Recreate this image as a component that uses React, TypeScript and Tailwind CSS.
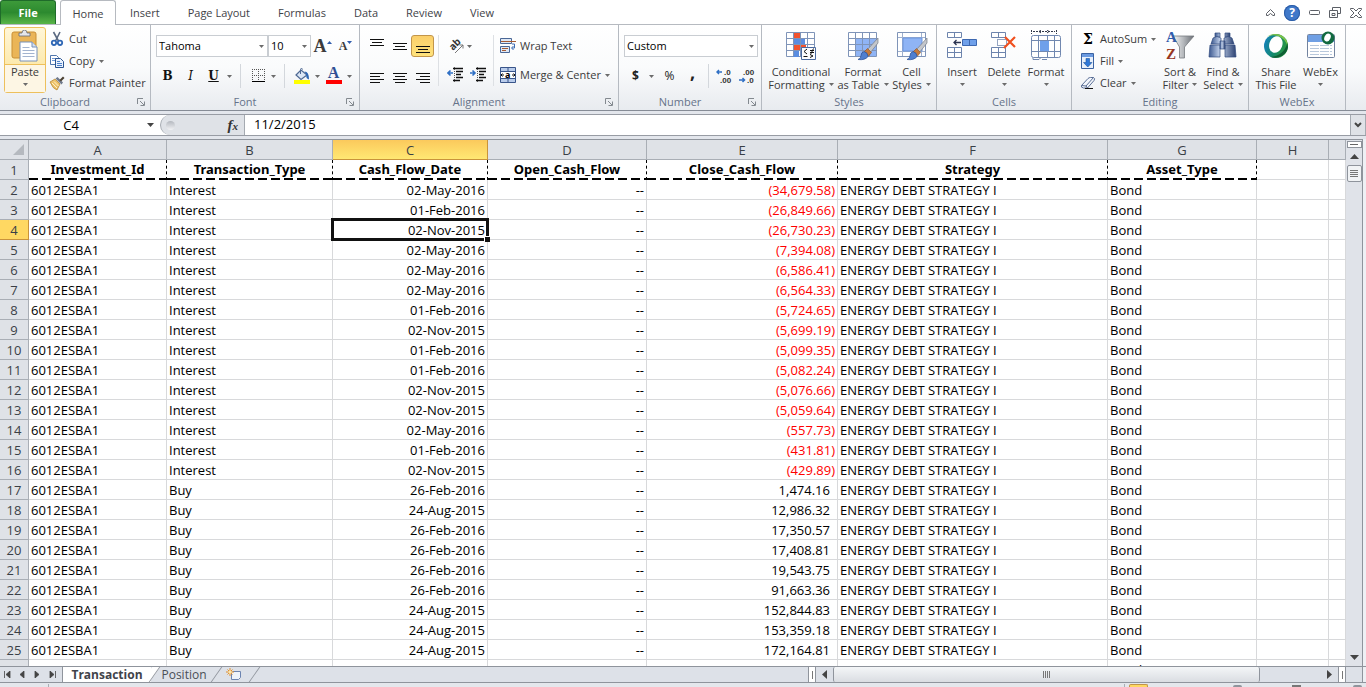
import type { ReactNode } from "react";

const tabs = ["Insert", "Page Layout", "Formulas", "Data", "Review", "View"];
const columns = ["A", "B", "C", "D", "E", "F", "G", "H", ""];
const headers = ["Investment_Id", "Transaction_Type", "Cash_Flow_Date", "Open_Cash_Flow", "Close_Cash_Flow", "Strategy", "Asset_Type"];

const rows: [string, string, string][] = [
    ["Interest", "02-May-2016", "(34,679.58)"],
    ["Interest", "01-Feb-2016", "(26,849.66)"],
    ["Interest", "02-Nov-2015", "(26,730.23)"],
    ["Interest", "02-May-2016", "(7,394.08)"],
    ["Interest", "02-May-2016", "(6,586.41)"],
    ["Interest", "02-May-2016", "(6,564.33)"],
    ["Interest", "01-Feb-2016", "(5,724.65)"],
    ["Interest", "02-Nov-2015", "(5,699.19)"],
    ["Interest", "01-Feb-2016", "(5,099.35)"],
    ["Interest", "01-Feb-2016", "(5,082.24)"],
    ["Interest", "02-Nov-2015", "(5,076.66)"],
    ["Interest", "02-Nov-2015", "(5,059.64)"],
    ["Interest", "02-May-2016", "(557.73)"],
    ["Interest", "01-Feb-2016", "(431.81)"],
    ["Interest", "02-Nov-2015", "(429.89)"],
    ["Buy", "26-Feb-2016", "1,474.16"],
    ["Buy", "24-Aug-2015", "12,986.32"],
    ["Buy", "26-Feb-2016", "17,350.57"],
    ["Buy", "26-Feb-2016", "17,408.81"],
    ["Buy", "26-Feb-2016", "19,543.75"],
    ["Buy", "26-Feb-2016", "91,663.36"],
    ["Buy", "24-Aug-2015", "152,844.83"],
    ["Buy", "24-Aug-2015", "153,359.18"],
    ["Buy", "24-Aug-2015", "172,164.81"],
];

const Arrow = () => (
    <svg className="h-[3px] w-[5px] shrink-0" viewBox="0 0 5 3" fill="#6b6b6b"><path d="M0 0h5L2.500 3z" /></svg>
);

const Divider = () => <span className="h-6 w-px shrink-0 bg-[#d3d7dc]" />;

/* ---------- ribbon icons ---------- */

const PasteIcon = () => (
    <svg className="h-8 w-8" viewBox="0 0 32 32">
        <rect x="3" y="2" width="24" height="26" rx="2" fill="#eab557" stroke="#c98f35" />
        <path d="M10 6V3h3q0-3 2.500-3T18 3h3v3z" fill="#e4e6ea" stroke="#666b75" strokeWidth=".8" />
        <path d="M11 12h12l5 5v14H11z" fill="#fff" stroke="#7790b8" />
        <path d="M23 12v5h5" fill="#d6e1f1" stroke="#7790b8" />
        <path d="M13.500 17.500h7M13.500 20.500h12M13.500 23.500h12M13.500 26.500h12" stroke="#a3b4cf" />
    </svg>
);

const CutIcon = () => (
    <svg className="h-4 w-4" viewBox="0 0 16 16" fill="none">
        <path d="M4.500 1l5 9M11 1L6.500 10" stroke="#5b6a82" strokeWidth="1.600" />
        <circle cx="5" cy="11.800" r="2.200" stroke="#2f67b5" strokeWidth="1.800" />
        <circle cx="11" cy="11.800" r="2.200" stroke="#2f67b5" strokeWidth="1.800" />
    </svg>
);

const CopyIcon = () => (
    <svg className="h-4 w-4" viewBox="0 0 16 16">
        <path d="M1.500 2.500h6l2 2v7h-8z" fill="#fff" stroke="#4f76ad" />
        <path d="M3 5.500h4M3 7.500h5" stroke="#6f98d3" />
        <path d="M6.500 5.500h5l3 3v6h-8z" fill="#eaf2fd" stroke="#2c5591" />
        <path d="M8 8.500h3M8 10.500h5M8 12.500h5" stroke="#4b7fc9" />
    </svg>
);

const PainterIcon = () => (
    <svg className="h-4 w-4" viewBox="0 0 16 16">
        <path d="M1 7l5-3 5 5-3 6q-4-1-7-8z" fill="#edc26a" stroke="#b78a38" strokeWidth=".8" />
        <path d="M3 8l5 5M5 6.500l4.500 4.500" stroke="#fff1c9" />
        <path d="M6.500 3.500l6 6 1.500-2-5.500-5.500z" fill="#707a8c" />
        <path d="M10.500 5l3.500-3.500 1.500 1.500L12 6.500z" fill="#4a4032" />
    </svg>
);

const BordersIcon = () => (
    <svg className="h-4 w-4" viewBox="0 0 16 16" stroke="#555">
        <path d="M2.500 1v12M8.500 1v12M14.500 1v12M2 1.500h13M2 7.500h13" strokeDasharray="1 1" />
        <path d="M2 13.500h13" stroke="#000" />
    </svg>
);

const BucketIcon = () => (
    <svg className="h-4 w-4" viewBox="0 0 16 16">
        <path d="M2 7l5-5 6 5-6 4.500z" fill="#dbe6f5" stroke="#4e6993" strokeWidth="1.200" />
        <path d="M6.500 6V1.500q0-1 1-1t1 1" fill="none" stroke="#4e6993" />
        <path d="M10.500 3.500q4.500 0 4.500 8-3.500-1-2.500-4.500z" fill="#2c66b4" />
        <path d="M0 12h16v4H0z" fill="#ff0" />
    </svg>
);

const AlignIcon = ({ kind }: { kind: "top" | "middle" | "bottom" | "left" | "center" | "right" }) => {
    const d = {
        top: "M1 1.500h14M3 4.500h10M1 7.500h14",
        middle: "M1 5.500h14M3 8.500h10M1 11.500h14",
        bottom: "M1 8.500h14M3 11.500h10M1 14.500h14",
        left: "M1 2.500h14M1 5.500h10M1 8.500h14M1 11.500h10",
        center: "M1 2.500h14M3 5.500h10M1 8.500h14M3 11.500h10",
        right: "M1 2.500h14M5 5.500h10M1 8.500h14M5 11.500h10",
    }[kind];
    return <svg className="h-4 w-4" viewBox="0 0 16 16"><path d={d} stroke="#111" strokeWidth="1.200" /></svg>;
};

const IndentIcon = ({ out }: { out?: boolean }) => (
    <svg className="h-4 w-4" viewBox="0 0 16 16" fill="none">
        <path d="M6 1.500h10M9 4.500h7M9 7.500h5M9 10.500h7M6 13.500h7" stroke="#111" strokeWidth="1.300" />
        <path d="M7.500 0v16" stroke="#555" strokeDasharray="1 1" />
        <path d={out ? "M6 6H1M3.500 3.500L1 6l2.500 2.500" : "M0 6h5M2.500 3.500L5 6 2.500 8.500"} stroke="#2f6fc4" strokeWidth="1.600" />
    </svg>
);

const OrientationIcon = () => (
    <svg className="h-5 w-5 overflow-visible" viewBox="0 0 20 20">
        <text x="3" y="12" transform="rotate(-45 8 10)" fontFamily="Noto Sans" fontSize="10" fontWeight="700" fill="#333">ab</text>
        <path d="M8 17l8-8M12.500 9H16v3.500" fill="none" stroke="#777" />
    </svg>
);

const WrapIcon = () => (
    <svg className="h-4 w-4" viewBox="0 0 16 16" fill="none">
        <path d="M.5.500h11v5H.5zM.5 8.500h9v6H.5z" fill="#dfe8f5" stroke="#4a6796" />
        <path d="M1 3.500h15M2 10.500h6M2 12.500h4" stroke="#a55a33" />
        <path d="M12 6h2.500v4H12M13.500 8L11.500 10l2 2" stroke="#3c6db5" />
    </svg>
);

const MergeIcon = () => (
    <svg className="h-4 w-4" viewBox="0 0 16 16">
        <path d="M.5.500h15v15H.5z" fill="#b9cceb" stroke="#39558a" />
        <path d="M.5 4.500h15M.5 11.500h15M8 1v3M8 12v3" stroke="#39558a" />
        <path d="M1 5h14v6H1z" fill="#fff" />
        <path d="M1 8h3M12 8h3M2.500 6.500L1 8l1.500 1.500M13.500 6.500L15 8l-1.500 1.500" fill="none" stroke="#111" />
        <text x="5" y="11" fontFamily="Noto Sans" fontSize="9" fontWeight="700">a</text>
    </svg>
);

const DecimalIcon = ({ more }: { more?: boolean }) => (
    <svg className="h-4 w-4" viewBox="0 0 16 16" fontFamily="Liberation Sans" fontSize="8" fontWeight="700" fill="#333">
        <text x={more ? 8 : 4} y="7">{more ? ".0" : ".00"}</text>
        <text x={more ? 4 : 8} y="15">{more ? ".00" : ".0"}</text>
        <path d={more ? "M6 4H1M3 2L1 4l2 2" : "M0 12h5.500M3.500 10l2 2-2 2"} fill="none" stroke="#2f6fc4" strokeWidth="1.500" />
    </svg>
);

const Brush = () => (
    <>
        <path d="M31 8L20 20l3 3 8-10z" fill="#c3c6cb" stroke="#767b85" strokeWidth=".7" />
        <path d="M20.500 18.500l4 4-3 3.500-4.500-4z" fill="#c57a3c" stroke="#8a4f20" strokeWidth=".6" />
        <path d="M17 21.500q4 1 4 5-3 4-10 3 3-1 3-4t3-4z" fill="#4f7fd0" stroke="#2a4f94" strokeWidth=".7" />
    </>
);

const ConditionalIcon = () => (
    <svg className="h-8 w-8" viewBox="0 0 32 32">
        <path d="M1.500 2.500h28v24h-28z" fill="#fff" stroke="#7f94b8" />
        <path d="M8 3h7v5H8zM8 15h13v5H8z" fill="#f2532e" />
        <path d="M8 9h12v6H8zM8 21h6v6H8z" fill="#5b8de0" />
        <path d="M8.500 3v23M15.500 3v23M22.500 3v23M2 8.500h27M2 14.500h27M2 20.500h27" stroke="#7f94b8" />
        <path d="M16.500 17.500h14v12h-14z" fill="#fbfcfe" stroke="#4b6a9f" />
        <path d="M22 19l-3 2.500 3 2.500M18.500 26.500h4M25 20.500h4M25 22.500h4M28.500 18.500l-3 6M25 24.500l3 1.500-3 1.500" fill="none" stroke="#111" />
    </svg>
);

const TableIcon = () => (
    <svg className="h-8 w-8" viewBox="0 0 32 32">
        <path d="M1.500 2.500h28v24h-28z" fill="#fff" stroke="#7f94b8" />
        <path d="M9 9h20v17H9z" fill="#8fb4f5" />
        <path d="M8.500 3v23M15.500 3v23M22.500 3v23M2 8.500h27M2 14.500h27M2 20.500h27" stroke="#7f94b8" />
        <Brush />
    </svg>
);

const CellStylesIcon = () => (
    <svg className="h-8 w-8" viewBox="0 0 32 32">
        <path d="M1.500 2.500h28v24h-28z" fill="#fff" stroke="#7f94b8" />
        <path d="M6.500 3v23M25.500 3v23M2 7.500h27M2 21.500h27" stroke="#9fb0cd" />
        <path d="M7 8h19v13H7z" fill="#8fb4f5" stroke="#6d95dc" />
        <Brush />
    </svg>
);

const InsertIcon = () => (
    <svg className="h-8 w-8" viewBox="0 0 32 32" stroke="#6d84ad" fill="#fff">
        <path d="M1.500 2.500h14v5h-14zM8.500 3v4M1.500 17.500h14v10h-14zM8.500 18v9M2 22.500h13" />
        <path d="M16.500 9.500h14v6h-14z" fill="#6fa0ea" stroke="#3d68b0" />
        <path d="M23.500 10v5" stroke="#3d68b0" />
        <path d="M15 12.500H8M10.500 10L8 12.500l2.500 2.500" fill="none" stroke="#2b3350" strokeWidth="1.300" />
    </svg>
);

const DeleteIcon = () => (
    <svg className="h-8 w-8" viewBox="0 0 32 32" stroke="#6d84ad" fill="#fff">
        <path d="M3.500 2.500h14v5h-14zM10.500 3v4M3.500 17.500h14v10h-14zM10.500 18v9M4 22.500h13" />
        <path d="M9.500 9.500h9v6h-9z" stroke="#2b4a85" strokeDasharray="1 1" />
        <path d="M17 7l10 10M27 7L16 18" fill="none" stroke="#f0501f" strokeWidth="2.200" />
    </svg>
);

const FormatIcon = () => (
    <svg className="h-8 w-8" viewBox="0 0 32 32" stroke="#7188b0" fill="none">
        <path d="M1.500 0v4M26.500 0v4M3 1.500h22" stroke="#333a4c" strokeDasharray="2 1" />
        <path d="M11 0L9 1.500 11 3M17 0l2 1.500L17 3" stroke="#333a4c" />
        <rect x="1.500" y="5.500" width="29" height="22" rx="2" fill="#fff" />
        <path d="M2 10.500h28M2 21.500h28M8.500 6v21M17.500 6v4M24.500 6v21M17.500 22v5" />
        <path d="M10 11h9v10h-9z" fill="#6fa0ea" stroke="none" />
        <path d="M3 27.500v2h6l2-2M12 29.500h5" />
    </svg>
);

const FillIcon = () => (
    <svg className="h-4 w-4" viewBox="0 0 16 16">
        <path d="M1.500.500h12v15h-12z" fill="#e8f0fb" stroke="#3a62a2" />
        <path d="M2 1h11v3H2z" fill="#6b9ae0" />
        <path d="M6 5.500h3.500v4h2.500l-4.200 4.500L3.500 9.500H6z" fill="#2f78d8" stroke="#1e569f" strokeWidth=".6" />
    </svg>
);

const EraserIcon = () => (
    <svg className="h-4 w-4" viewBox="0 0 16 16" stroke="#5a6f96">
        <path d="M1.500 10.500L8 3.500q1-1 2.500-1h3q2 1 .5 3L7.500 13h-4q-3-.5-2-2.500z" fill="#f4f7fc" />
        <path d="M1.500 10.500l4.500.5 7.500-8.500M6 11l1.500 2" fill="none" />
        <path d="M5 13.500h8" stroke="#111" />
    </svg>
);

const SortIcon = () => (
    <svg className="h-8 w-8" viewBox="0 0 32 32">
        <defs>
            <linearGradient id="funnel"><stop stopColor="#f6f6f6" /><stop offset=".5" stopColor="#b4b7bb" /><stop offset="1" stopColor="#686c72" /></linearGradient>
        </defs>
        <path d="M9 6h21L20.500 17v11h-5V17z" fill="url(#funnel)" stroke="#777b80" strokeWidth=".8" />
        <text x="2" y="12" fontFamily="Liberation Serif" fontSize="15" fontWeight="700" fill="#2f5cac">A</text>
        <text x="2" y="29" fontFamily="Liberation Serif" fontSize="15" fontWeight="700" fill="#96361f">Z</text>
    </svg>
);

const FindIcon = () => (
    <svg className="h-8 w-8" viewBox="0 0 32 32">
        <defs>
            <linearGradient id="barrel"><stop stopColor="#3b588f" /><stop offset=".4" stopColor="#c4d3ec" /><stop offset="1" stopColor="#2c4272" /></linearGradient>
        </defs>
        <g fill="url(#barrel)" stroke="#314b7e" strokeWidth=".7">
            <path d="M8 3h5v4H8zM18 3h5v4h-5z" />
            <path d="M6 8q4-3 8 0v6H4zM17 8q4-3 8 0l2 6H17z" />
            <path d="M3 15h10v12H2zM18 15h10l1 12H18z" />
            <path d="M13 11h5v8h-5z" />
        </g>
    </svg>
);

const ShareIcon = () => (
    <svg className="h-8 w-8" viewBox="0 0 32 32">
        <defs>
            <linearGradient id="ball" x1="0" y1=".3" x2="1" y2=".6"><stop stopColor="#1681bd" /><stop offset=".5" stopColor="#128a6a" /><stop offset="1" stopColor="#2f9a3c" /></linearGradient>
        </defs>
        <circle cx="16" cy="16" r="12" fill="url(#ball)" />
        <path d="M7 7Q13 2 21 5q7 4 7 12-3-9-10-11-6-2-11 1z" fill="#7cc348" />
        <path d="M27.500 13q2 8-5 12.500-6 3.500-12 1.500 13-1 17-14z" fill="#0f5f35" />
        <ellipse cx="16" cy="14.500" rx="6.500" ry="8.500" transform="rotate(20 16 14)" fill="#fff" />
    </svg>
);

const WebExIcon = () => (
    <svg className="h-8 w-8" viewBox="0 0 32 32">
        <rect x="2.500" y="4.500" width="27" height="23" rx="1" fill="#fff" stroke="#72839f" />
        <path d="M3 5h26v7H3z" fill="#6f9fe4" />
        <path d="M5 15.500h22M5 18.500h22M5 21.500h22M5 24.500h22" stroke="#b8c8dc" strokeDasharray="9 1" />
        <circle cx="23" cy="8" r="6.500" fill="#126a40" />
        <ellipse cx="22.500" cy="7.500" rx="3" ry="4.200" transform="rotate(25 22.500 7.500)" fill="#fff" />
    </svg>
);

/* ---------- ribbon parts ---------- */

const Group = ({ label, className, launcher, children }: { label: string; className: string; launcher?: boolean; children: ReactNode }) => (
    <section className={`flex shrink-0 flex-col border-r border-[#b5bac1] ${className}`}>
        <div className="flex min-h-0 flex-1">{children}</div>
        <div className="flex h-4 items-center text-[#66738a]">
            <span className="flex-1 text-center">{label}</span>
            {launcher && (
                <button aria-label={`${label} settings`} className="flex w-5 justify-end pr-[5px]">
                    <svg className="h-2 w-2" viewBox="0 0 8 8" fill="none" stroke="#83898f"><path d="M.5 6V.500H6M3 3l4 4M7.500 3.500v4h-4" /></svg>
                </button>
            )}
        </div>
    </section>
);

const BigButton = ({ icon, lines, className, arrow = true }: { icon: ReactNode; lines: string[]; className: string; arrow?: boolean }) => (
    <button className={`flex shrink-0 flex-col items-center whitespace-nowrap pt-[5px] leading-[13px] ${className}`}>
        {icon}
        <span className="mt-[3px]">{lines[0]}</span>
        <span className="flex h-[13px] items-center gap-1">{lines[1]}{arrow && <Arrow />}</span>
    </button>
);

const SmallButton = ({ icon, label, arrow }: { icon: ReactNode; label: string; arrow?: boolean }) => (
    <button className="flex h-[22px] items-center gap-1 whitespace-nowrap">
        {icon}
        <span>{label}</span>
        {arrow && <Arrow />}
    </button>
);

const Tool = ({ label, children }: { label: string; children: ReactNode }) => (
    <button aria-label={label} className="flex h-[22px] w-[23px] items-center justify-center">{children}</button>
);

const More = ({ label }: { label: string }) => (
    <button aria-label={label} className="flex h-[22px] w-[9px] items-center justify-center"><Arrow /></button>
);

const Combo = ({ label, value, className }: { label: string; value: string; className: string }) => (
    <div className={`relative h-[22px] ${className}`}>
        <select aria-label={label} className="h-full w-full appearance-none border border-[#c9cdd2] bg-white px-0.5 text-[11px] text-black">
            <option>{value}</option>
        </select>
        <span className="pointer-events-none absolute inset-y-0 right-1 flex items-center"><Arrow /></span>
    </div>
);

const Ribbon = () => (
    <div className="flex h-[86px] shrink-0 overflow-hidden border-b border-[#868c96] bg-linear-to-b from-white via-[#fafbfc] to-[#e8ebef] text-[11px] text-[#3b3b3b]">
        <Group label="Clipboard" className="w-[151px]" launcher>
            <button className="ml-1 mt-0.5 flex h-[66px] w-[42px] shrink-0 flex-col items-center rounded-[3px] border border-[#edc05c] bg-linear-to-b from-[#fff6d8] to-[#fbe08a]">
                <span className="flex h-[37px] w-full shrink-0 items-center justify-center border-b border-[#edc05c]"><PasteIcon /></span>
                <span className="flex w-full flex-1 flex-col items-center gap-[5px] bg-[#fdf6e4] leading-[13px]">Paste<Arrow /></span>
            </button>
            <div className="ml-[3px] mt-[3px] flex flex-col">
                <SmallButton icon={<CutIcon />} label="Cut" />
                <SmallButton icon={<CopyIcon />} label="Copy" arrow />
                <SmallButton icon={<PainterIcon />} label="Format Painter" />
            </div>
        </Group>

        <Group label="Font" className="w-[209px]" launcher>
            <div className="flex flex-col gap-[7px] pl-[5px] pt-[10px]">
                <div className="flex">
                    <Combo label="Font name" value="Tahoma" className="w-[112px]" />
                    <Combo label="Font size" value="10" className="w-[43px]" />
                    <Tool label="Grow font">
                        <span className="font-['Liberation_Serif',serif] text-lg font-bold">A</span>
                        <svg className="mb-2 h-[3px] w-[5px]" viewBox="0 0 5 3" fill="#2f5cac"><path d="M0 3h5L2.500 0z" /></svg>
                    </Tool>
                    <Tool label="Shrink font">
                        <span className="font-['Liberation_Serif',serif] text-xs font-bold">A</span>
                        <svg className="mb-2 h-[3px] w-[5px]" viewBox="0 0 5 3" fill="#2f5cac"><path d="M0 0h5L2.500 3z" /></svg>
                    </Tool>
                </div>
                <div className="flex items-center font-['DejaVu_Serif',serif] text-xs text-[#111]">
                    <Tool label="Bold"><b>B</b></Tool>
                    <Tool label="Italic"><span className="italic">I</span></Tool>
                    <Tool label="Underline"><b className="underline">U</b></Tool>
                    <More label="Underline styles" />
                    <span className="flex w-3 justify-center"><Divider /></span>
                    <Tool label="Borders"><BordersIcon /></Tool>
                    <More label="Border styles" />
                    <span className="flex w-3 justify-center"><Divider /></span>
                    <Tool label="Fill color"><BucketIcon /></Tool>
                    <More label="Fill colors" />
                    <Tool label="Font color">
                        <span className="flex h-4 w-4 items-end justify-center border-b-4 border-[#f00] font-['Liberation_Serif',serif] text-base leading-[14px] text-[#2f4f93]"><b>A</b></span>
                    </Tool>
                    <More label="Font colors" />
                </div>
            </div>
        </Group>

        <Group label="Alignment" className="w-[259px]" launcher>
            <div className="flex gap-1 pl-[5px] pt-[10px]">
                <div className="grid grid-cols-3 gap-y-[7px]">
                    <Tool label="Top align"><AlignIcon kind="top" /></Tool>
                    <Tool label="Middle align"><AlignIcon kind="middle" /></Tool>
                    <button aria-label="Bottom align" className="flex h-[22px] w-[23px] items-center justify-center rounded-[3px] border border-[#c2954a] bg-linear-to-b from-[#fbcf6a] to-[#ffe37c]"><AlignIcon kind="bottom" /></button>
                    <Tool label="Align left"><AlignIcon kind="left" /></Tool>
                    <Tool label="Center"><AlignIcon kind="center" /></Tool>
                    <Tool label="Align right"><AlignIcon kind="right" /></Tool>
                </div>
                <span className="h-[51px] w-px bg-[#dde0e4]" />
                <div className="flex flex-col gap-[7px]">
                    <button aria-label="Orientation" className="flex h-[22px] items-center pl-1"><OrientationIcon /><Arrow /></button>
                    <div className="flex">
                        <Tool label="Decrease indent"><IndentIcon out /></Tool>
                        <Tool label="Increase indent"><IndentIcon /></Tool>
                    </div>
                </div>
                <span className="h-[51px] w-px bg-[#dde0e4]" />
                <div className="flex flex-col gap-[7px] pl-0.5">
                    <SmallButton icon={<WrapIcon />} label="Wrap Text" />
                    <SmallButton icon={<MergeIcon />} label="Merge & Center" arrow />
                </div>
            </div>
        </Group>

        <Group label="Number" className="w-[143px]" launcher>
            <div className="flex flex-col gap-[7px] pl-[5px] pt-[10px]">
                <Combo label="Number format" value="Custom" className="w-[134px]" />
                <div className="flex items-center text-xs text-[#222]">
                    <Tool label="Accounting format"><b>$</b></Tool>
                    <More label="Currencies" />
                    <span className="w-0.5" />
                    <Tool label="Percent style">%</Tool>
                    <Tool label="Comma style"><b className="pb-2 text-lg leading-3">,</b></Tool>
                    <span className="flex w-2 justify-center"><Divider /></span>
                    <Tool label="Increase decimal"><DecimalIcon more /></Tool>
                    <Tool label="Decrease decimal"><DecimalIcon /></Tool>
                </div>
            </div>
        </Group>

        <Group label="Styles" className="w-[175px]">
            <div className="flex pl-1">
                <BigButton icon={<ConditionalIcon />} lines={["Conditional", "Formatting"]} className="w-[70px]" />
                <BigButton icon={<TableIcon />} lines={["Format", "as Table"]} className="w-[54px]" />
                <BigButton icon={<CellStylesIcon />} lines={["Cell", "Styles"]} className="w-[43px]" />
            </div>
        </Group>

        <Group label="Cells" className="w-[135px]">
            <div className="flex pl-1">
                <BigButton icon={<InsertIcon />} lines={["Insert", ""]} className="w-[42px]" />
                <BigButton icon={<DeleteIcon />} lines={["Delete", ""]} className="w-[42px]" />
                <BigButton icon={<FormatIcon />} lines={["Format", ""]} className="w-[42px]" />
            </div>
        </Group>

        <Group label="Editing" className="w-[177px]">
            <div className="flex w-[86px] flex-col pl-2 pt-[3px]">
                <SmallButton icon={<span className="w-4 text-center font-['DejaVu_Serif',serif] text-sm font-bold text-black">Σ</span>} label="AutoSum" arrow />
                <SmallButton icon={<FillIcon />} label="Fill" arrow />
                <SmallButton icon={<EraserIcon />} label="Clear" arrow />
            </div>
            <BigButton icon={<SortIcon />} lines={["Sort &", "Filter"]} className="w-[44px]" />
            <BigButton icon={<FindIcon />} lines={["Find &", "Select"]} className="w-[42px]" />
        </Group>

        <Group label="WebEx" className="w-[97px]">
            <div className="flex pl-1">
                <BigButton icon={<ShareIcon />} lines={["Share", "This File"]} className="w-[46px]" arrow={false} />
                <BigButton icon={<WebExIcon />} lines={["WebEx", ""]} className="w-[43px]" />
            </div>
        </Group>
    </div>
);

const TabBar = () => (
    <nav className="flex h-[25px] shrink-0 items-end border-b border-[#b6bac0] bg-white text-[11px] text-[#3f4247]">
        <button className="mr-1 h-6 w-14 rounded-t-[3px] border border-b-0 border-[#1f6b2a] bg-linear-to-b from-[#3d9a3a] via-[#2c8a2f] to-[#59b548] pt-0.5 font-bold text-white">File</button>
        <button className="-mb-px h-[25px] w-14 rounded-t-[3px] border border-b-0 border-[#b6bac0] bg-white pt-0.5">Home</button>
        <div className="flex h-6 flex-1 items-center gap-7 pl-[14px] pt-0.5">
            {tabs.map((tab) => <button key={tab}>{tab}</button>)}
        </div>
        <div className="flex h-6 items-center gap-[9px] pr-1 pt-px text-[#5b5f66]">
            <button aria-label="Minimize ribbon">
                <svg className="h-2 w-[9px]" viewBox="0 0 9 8" fill="none" stroke="currentColor"><path d="M.5 4.500l4-4 4 4v2H7l-2.500-2-2.500 2H.5z" /></svg>
            </button>
            <button aria-label="Help" className="flex h-4 w-4 items-center justify-center rounded-full bg-[#3f78c9] text-xs font-bold text-white ring-1 ring-inset ring-[#2b5ca6]">?</button>
            <button aria-label="Minimize">
                <svg className="h-[5px] w-[11px]" viewBox="0 0 11 5" fill="none" stroke="currentColor"><rect x=".5" y=".5" width="10" height="4" rx="1" /></svg>
            </button>
            <button aria-label="Restore">
                <svg className="h-[11px] w-3" viewBox="0 0 12 11" fill="none" stroke="currentColor"><path d="M3.500 3V.500h8v6H8.500M.5 3.500h8v7h-8zM3 6.500h3v2H3z" /></svg>
            </button>
            <button aria-label="Close">
                <svg className="h-[10px] w-3" viewBox="0 0 12 10" fill="none" stroke="currentColor"><path d="M.5.500h3L6 3 8.500.500h3v1L8 5l3.500 3.500v1h-3L6 7 3.500 9.500h-3v-1L4 5 .5 1.500z" /></svg>
            </button>
        </div>
    </nav>
);

const FormulaBar = () => (
    <div className="flex h-[28px] shrink-0 flex-col bg-[#e3e6ec] pt-[3px] text-[13px] text-black">
        <div className="flex h-[22px] border-y border-[#989ca4] bg-white">
            <div className="relative w-40">
                <input aria-label="Name box" defaultValue="C4" className="h-full w-[142px] bg-transparent text-center outline-none" />
                <svg className="absolute right-[6px] top-2 h-1 w-[7px]" viewBox="0 0 7 4" fill="#444"><path d="M0 0h7L3.500 4z" /></svg>
            </div>
            <div className="flex w-[85px] items-center justify-between rounded-l-full border-l border-r border-[#a5aab1] bg-[#dfe2e7] pl-[5px] pr-1.5">
                <span className="h-[9px] w-[9px] rounded-full bg-linear-to-b from-[#b4b8bf] to-[#f2f3f5]" />
                <button aria-label="Insert function" className="font-['Liberation_Serif',serif] text-[15px] font-bold italic text-[#333]">f<span className="text-[11px]">x</span></button>
            </div>
            <input aria-label="Formula" defaultValue="11/2/2015" className="min-w-0 flex-1 pl-[9px] outline-none" />
            <button aria-label="Expand formula bar" className="flex w-4 items-center justify-center border border-y-0 border-[#a5aab1] bg-[#dfe2e7]">
                <svg className="h-[6px] w-2" viewBox="0 0 8 6" fill="none" stroke="#444" strokeWidth="2"><path d="M1 1l3 3 3-3" /></svg>
            </button>
        </div>
    </div>
);

const cell = "h-5 overflow-hidden whitespace-nowrap border-b border-r border-[#d8d9db] px-0.5 pt-0.5 leading-[17px]";

const RowHead = ({ n, active }: { n: number; active?: boolean }) => (
    <th scope="row" className={`h-5 border-b border-r px-0 pt-0.5 text-center text-[13px] font-normal leading-[17px] text-[#3a3f46] ${active ? "border-[#c9933b] bg-[#ffd862]" : "border-[#a9aeb5] bg-[#dfe2e7]"}`}>{n}</th>
);

const Grid = () => (
    <div className="min-w-0 flex-1 overflow-hidden border-t border-[#8f949c] bg-white">
        <table className="w-full table-fixed border-separate border-spacing-0 text-[13px] text-black">
            <colgroup>
                <col className="w-[29px]" />
                <col className="w-[138px]" />
                <col className="w-[166px]" />
                <col className="w-[155px]" />
                <col className="w-[159px]" />
                <col className="w-[191px]" />
                <col className="w-[270px]" />
                <col className="w-[149px]" />
                <col className="w-[72px]" />
                <col />
            </colgroup>
            <thead>
                <tr>
                    <th aria-label="Select all" className="h-5 border-b border-r border-[#a9aeb5] bg-[#dfe2e7] p-0">
                        <svg className="ml-auto mr-1 h-[11px] w-[11px]" viewBox="0 0 11 11" fill="#b5b9bf"><path d="M11 0v11H0z" /></svg>
                    </th>
                    {columns.map((c, i) => (
                        <th key={i} scope="col" className={`h-5 border-b border-r px-0 pt-0.5 font-normal leading-[17px] text-[#3a3f46] ${c === "C" ? "border-[#c9933b] bg-linear-to-b from-[#fbc95c] to-[#ffe873]" : "border-[#a9aeb5] bg-[#dfe2e7]"}`}>{c}</th>
                    ))}
                </tr>
            </thead>
            <tbody>
                <tr>
                    <RowHead n={1} />
                    {headers.map((h) => (
                        <td key={h} className="h-5 border-r border-dashed border-black bg-[repeating-linear-gradient(90deg,#000_0_9px,transparent_9px_13px)] bg-size-[100%_2px] bg-bottom bg-no-repeat px-0 pb-0.5 text-center font-['Noto_Sans',sans-serif] font-bold leading-[17px]">{h}</td>
                    ))}
                    <td className={cell} />
                    <td className={cell} />
                </tr>
                {rows.map(([type, date, amount], i) => {
                    const active = i === 2;
                    const negative = amount.startsWith("(");
                    return (
                        <tr key={i}>
                            <RowHead n={i + 2} active={active} />
                            <td className={cell}>6012ESBA1</td>
                            <td className={cell}>{type}</td>
                            {active ? (
                                <td className="relative h-5 border-b border-r border-[#d8d9db] px-0.5 pt-0.5 text-right leading-[17px]">
                                    {date}
                                    <span className="absolute -inset-0.5 border-3 border-[#111]" />
                                    <span className="absolute -bottom-[3px] -right-[3px] h-[6px] w-[6px] border-l border-t border-white bg-[#111]" />
                                </td>
                            ) : (
                                <td className={`${cell} text-right`}>{date}</td>
                            )}
                            <td className={`${cell} text-right`}>--</td>
                            <td className={`h-5 border-b border-r border-[#d8d9db] pt-0.5 text-right leading-[17px] ${negative ? "pr-0.5 text-[#f00]" : "pr-[7px]"}`}>{amount}</td>
                            <td className={cell}>ENERGY DEBT STRATEGY I</td>
                            <td className={cell}>Bond</td>
                            <td className={cell} />
                            <td className={cell} />
                        </tr>
                    );
                })}
                <tr>
                    <th className="h-5 border-r border-[#a9aeb5] bg-[#dfe2e7]" />
                    <td className={cell} />
                    <td className={cell} />
                    <td className={cell} />
                    <td className={cell} />
                    <td className={cell} />
                    <td className={cell} />
                    <td className={cell}>Bond</td>
                    <td className={cell} />
                    <td className={cell} />
                </tr>
            </tbody>
        </table>
    </div>
);

const VerticalScroll = () => (
    <div className="flex w-[17px] shrink-0 flex-col items-center border-r border-t border-[#8f949c] bg-[#e0e3e9]">
        <span className="mt-px flex h-[7px] w-[15px] items-center justify-center border border-[#8f949c] bg-white"><span className="h-px w-2 bg-[#666]" /></span>
        <button aria-label="Scroll up" className="flex h-[17px] items-center">
            <svg className="h-[5px] w-[9px]" viewBox="0 0 9 5" fill="#444"><path d="M0 5h9L4.500 0z" /></svg>
        </button>
        <div className="flex h-[17px] w-[15px] flex-col items-center justify-center gap-px rounded-xs border border-[#8f949c] bg-[#f1f3f5]">
            <span className="h-px w-2 bg-[#777]" />
            <span className="h-px w-2 bg-[#777]" />
            <span className="h-px w-2 bg-[#777]" />
            <span className="h-px w-2 bg-[#777]" />
        </div>
        <button aria-label="Scroll down" className="mt-auto flex h-[17px] items-center">
            <svg className="h-[5px] w-[9px]" viewBox="0 0 9 5" fill="#444"><path d="M0 0h9L4.500 5z" /></svg>
        </button>
    </div>
);

const navIcons = [
    { label: "First sheet", d: "M.5 0v7M6 0v7L2 3.500z" },
    { label: "Previous sheet", d: "M5 0v7L1 3.500z" },
    { label: "Next sheet", d: "M1 0v7l4-3.500z" },
    { label: "Last sheet", d: "M6.500 0v7M1 0v7l4-3.500z" },
];

const SheetBar = () => (
    <footer className="shrink-0 text-xs">
        <div className="flex h-[17px] border-y border-[#8f949c] bg-[#dde1e8]">
            <div className="flex w-[63px] items-center justify-around border-r border-[#8f949c] pr-0.5">
                {navIcons.map(({ label, d }) => (
                    <button key={label} aria-label={label}>
                        <svg className="h-[7px] w-[7px]" viewBox="0 0 7 7" fill="#444"><path d={d} stroke="#444" strokeWidth=".8" /></svg>
                    </button>
                ))}
            </div>
            <button className="relative w-[88px] bg-white font-bold leading-[15px] text-[#3f434a]">
                <span className="absolute inset-y-0 -right-1 w-2 -skew-x-[35deg] border-r border-[#8f949c] bg-white" />
                <span className="relative">Transaction</span>
            </button>
            <button className="relative w-[66px] leading-[15px] text-[#4a4f57]">
                <span className="absolute inset-y-0 right-0 w-2 -skew-x-[35deg] border-r border-[#8f949c]" />
                Position
            </button>
            <button aria-label="Insert worksheet" className="relative flex w-[34px] items-center justify-center">
                <svg className="h-[13px] w-4" viewBox="0 0 16 13">
                    <path d="M6.500 3.500h8v6l-2 2h-7V6" fill="#edf3fb" stroke="#6c84b0" />
                    <path d="M4 0v8M0 4h8M1.500 1.500l5 5M6.500 1.500l-5 5" stroke="#e3902c" />
                    <circle cx="4" cy="4" r="1.500" fill="#ffe9a6" />
                </svg>
                <span className="absolute inset-y-0 -right-1 w-2 -skew-x-[35deg] border-r border-[#8f949c]" />
            </button>
            <span className="flex-1" />
            <div className="flex w-[538px]">
                <span className="flex w-2 items-center justify-center border border-y-0 border-[#8f949c] bg-white"><span className="h-2 w-px bg-[#777]" /></span>
                <button aria-label="Scroll left" className="flex w-[17px] items-center justify-center">
                    <svg className="h-[9px] w-[5px]" viewBox="0 0 5 9" fill="#444"><path d="M5 0v9L0 4.500z" /></svg>
                </button>
                <div className="flex w-[427px] items-center justify-center gap-px rounded-xs border border-y-0 border-[#8f949c] bg-linear-to-b from-[#f4f6f8] to-[#dadde2]">
                    <span className="h-[7px] w-px bg-[#777]" />
                    <span className="h-[7px] w-px bg-[#777]" />
                    <span className="h-[7px] w-px bg-[#777]" />
                    <span className="h-[7px] w-px bg-[#777]" />
                </div>
                <button aria-label="Scroll right" className="ml-auto flex w-[17px] items-center justify-center">
                    <svg className="h-[9px] w-[5px]" viewBox="0 0 5 9" fill="#444"><path d="M0 0v9l5-4.500z" /></svg>
                </button>
                <span className="flex w-2 items-center justify-center border border-y-0 border-[#8f949c] bg-white"><span className="h-2 w-px bg-[#777]" /></span>
            </div>
            <span className="w-[17px] border-r border-[#8f949c]" />
            <span className="w-[3px] bg-[#eef0f4]" />
        </div>
        <div className="flex h-1 items-end overflow-hidden bg-[#e4e7ec]">
            <span className="ml-12 h-[3px] w-px bg-[#a9aeb5]" />
            <span className="flex-1" />
            <span className="h-[3px] w-px bg-[#a9aeb5]" />
            <span className="ml-1 mr-[85px] h-[3px] w-[19px] rounded-t-xs border border-b-0 border-[#c2954a] bg-[#ffd862]" />
            <span className="mr-[50px] h-0.5 w-[9px] rounded-t-full bg-[#8f949c]" />
            <span className="mr-[52px] h-0.5 w-[9px] bg-[#777]" />
            <span className="mr-1 h-0.5 w-[9px] rounded-t-full bg-[#8f949c]" />
        </div>
    </footer>
);

export const App = () => {
    return (
        <div className="flex h-screen w-full flex-col overflow-hidden bg-white font-['Open_Sans','Noto_Sans',sans-serif]">
            <TabBar />
            <Ribbon />
            <FormulaBar />
            <main className="flex min-h-0 flex-1">
                <Grid />
                <VerticalScroll />
                <span className="w-[3px] shrink-0 bg-[#eef0f4]" />
            </main>
            <SheetBar />
        </div>
    );
};

export default App;
